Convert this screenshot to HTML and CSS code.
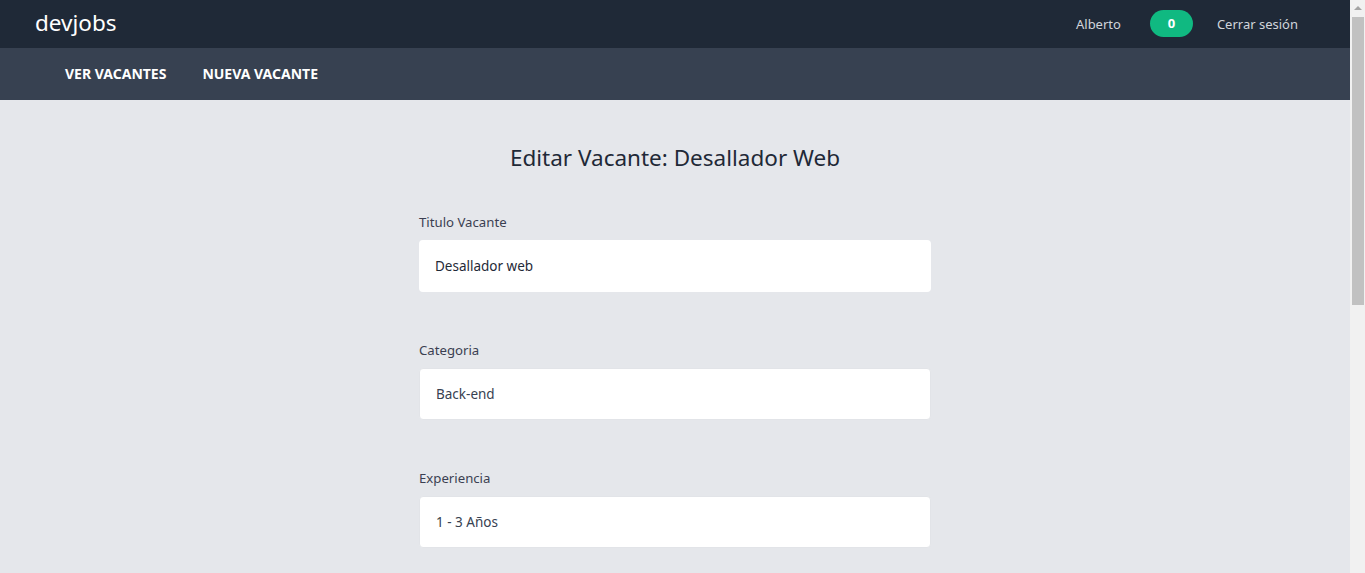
FILE: index.html
```html
<!DOCTYPE html>
<html lang="es">
<head>
<meta charset="utf-8">
<title>devjobs</title>
<link rel="stylesheet" href="styles.css">
</head>
<body>
<header class="topbar">
  <div class="container topbar-inner">
    <a class="logo" href="#">devjobs</a>
    <div class="user">
      <span class="user-name">Alberto</span>
      <span class="badge">0</span>
      <a class="logout" href="#">Cerrar sesión</a>
    </div>
  </div>
</header>
<nav class="navbar">
  <div class="container nav-inner">
    <a class="nav-link" href="#">Ver Vacantes</a>
    <a class="nav-link" href="#">Nueva Vacante</a>
  </div>
</nav>
<main class="main">
  <h1 class="title">Editar Vacante: Desallador Web</h1>
  <form class="form">
    <div class="field">
      <label class="label">Titulo Vacante</label>
      <input class="input" type="text" value="Desallador web">
    </div>
    <div class="field">
      <label class="label">Categoria</label>
      <div class="select">Back-end</div>
    </div>
    <div class="field">
      <label class="label">Experiencia</label>
      <div class="select">1 - 3 Años</div>
    </div>
  </form>
</main>
<div class="scrollbar" aria-hidden="true">
  <div class="scroll-arrow"></div>
  <div class="scroll-thumb"></div>
</div>
</body>
</html>
```
FILE: styles.css
```css
* { box-sizing: border-box; }
html, body { margin: 0; padding: 0; }
html { overflow: hidden; }
body {
  background: #e5e7eb;
  font-family: "Noto Sans", "Open Sans", Arial, sans-serif;
  color: #1f2937;
  padding-right: 15px;
}
a { text-decoration: none; color: inherit; }
.container { width: 1280px; margin: 0 auto; }
.topbar { background: #1f2937; height: 48px; }
.topbar-inner { display: flex; align-items: center; justify-content: space-between; height: 48px; }
.logo { color: #fff; font-size: 22.5px; line-height: 32px; margin-top: -2px; }
.user { display: flex; align-items: center; margin-right: 17px; }
.user-name, .logout { color: #d1d5db; font-size: 13px; }
.badge {
  background: #10b981; color: #fff; font-weight: 700; font-size: 13px;
  width: 43px; height: 27px; border-radius: 14px;
  display: flex; align-items: center; justify-content: center;
  margin: -2px 24px 0 29px;
}
.navbar { background: #374151; height: 52px; }
.nav-inner { display: flex; align-items: center; height: 52px; padding-left: 30px; gap: 36px; }
.nav-link { color: #fff; font-weight: 700; text-transform: uppercase; font-size: 14px; margin-top: -2px; }
.main { padding: 42px 0 20px; }
.title { font-size: 22.5px; font-weight: 400; line-height: 32px; margin: 0; text-align: center; color: #1f2937; }
.form { width: 512px; margin: 38px auto 0; }
.field { margin-bottom: 48px; }
.field:last-child { margin-bottom: 0; }
.label { display: block; font-size: 13.2px; line-height: 20px; color: #3b3f51; margin-bottom: 8px; }
.input {
  display: block; width: 100%; height: 52px; border: 0; border-radius: 4px;
  background: #fff; padding: 0 16px; font: inherit; font-size: 13.5px; color: #1f2937;
}
.select {
  height: 52px; border: 1px solid #e2e4e8; border-radius: 4px; background: #fff;
  padding: 0 16px; display: flex; align-items: center; font-size: 13.5px; color: #374151;
}
.scrollbar {
  position: fixed; top: 0; right: 0; width: 15px; height: 100vh;
  background: #f1f1f1; display: flex; flex-direction: column; align-items: center;
}
.scroll-arrow {
  width: 0; height: 0; margin-top: 6px;
  border-left: 4px solid transparent; border-right: 4px solid transparent;
  border-bottom: 4px solid #a3a3a3;
}
.scroll-thumb {
  width: 12px; height: 288px; margin-top: 7px; margin-left: 1px;
  background: #c1c1c1;
}
```
